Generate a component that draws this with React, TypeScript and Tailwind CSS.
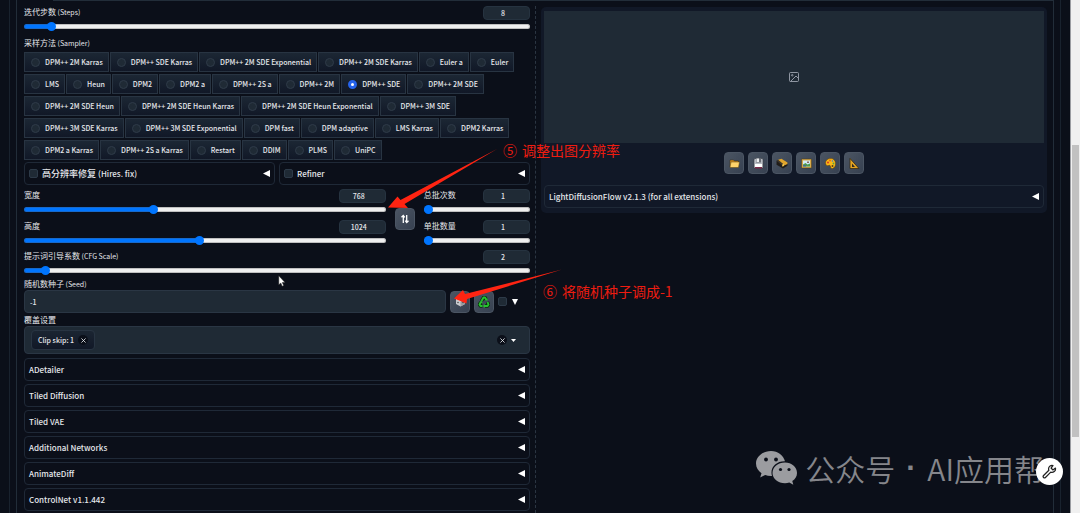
import { useState } from "react";
import type { ReactNode } from "react";

const samplers = [
  "DPM++ 2M Karras", "DPM++ SDE Karras", "DPM++ 2M SDE Exponential", "DPM++ 2M SDE Karras", "Euler a", "Euler",
  "LMS", "Heun", "DPM2", "DPM2 a", "DPM++ 2S a", "DPM++ 2M", "DPM++ SDE", "DPM++ 2M SDE",
  "DPM++ 2M SDE Heun", "DPM++ 2M SDE Heun Karras", "DPM++ 2M SDE Heun Exponential", "DPM++ 3M SDE",
  "DPM++ 3M SDE Karras", "DPM++ 3M SDE Exponential", "DPM fast", "DPM adaptive", "LMS Karras", "DPM2 Karras",
  "DPM2 a Karras", "DPM++ 2S a Karras", "Restart", "DDIM", "PLMS", "UniPC",
];

const extensions = ["ADetailer", "Tiled Diffusion", "Tiled VAE", "Additional Networks", "AnimateDiff", "ControlNet v1.1.442"];

function SliderField({ id, label, note, min, max, step = 1, initial }: {
  id: string; label: string; note?: string; min: number; max: number; step?: number; initial: number;
}) {
  const [value, setValue] = useState(initial);
  const ratio = (value - min) / (max - min);
  const stop = `calc(${ratio * 100}% + ${(0.5 - ratio) * 9}px)`;
  return (
    <div>
      <div className="flex h-[14px] items-start justify-between">
        <label htmlFor={id} className="text-[8px] leading-3">
          {label}
          {note && <span className="text-[7px]"> {note}</span>}
        </label>
        <input
          type="number"
          aria-label={label}
          value={value}
          min={min}
          max={max}
          onChange={(e) => setValue(Number(e.target.value))}
          className="h-[14px] w-[47px] rounded-[4px] border border-[#263340] bg-[#1f2a35] pr-[7px] text-center leading-3 font-medium [appearance:textfield] [&::-webkit-inner-spin-button]:appearance-none"
        />
      </div>
      <div className="mt-px flex h-[10px] items-center">
        <input
          id={id}
          type="range"
          min={min}
          max={max}
          step={step}
          value={value}
          onChange={(e) => setValue(Number(e.target.value))}
          style={{ backgroundImage: `linear-gradient(to right, #0075ff ${stop}, #efefef ${stop})` }}
          className="h-[5px] w-full appearance-none rounded-full shadow-[inset_0_0_0_1px_rgba(80,80,80,0.3)] [&::-webkit-slider-thumb]:size-[9px] [&::-webkit-slider-thumb]:appearance-none [&::-webkit-slider-thumb]:rounded-full [&::-webkit-slider-thumb]:bg-[#0075ff]"
        />
      </div>
    </div>
  );
}

function LeftTriangle() {
  return (
    <svg viewBox="0 0 7 7" className="size-[7px] shrink-0" fill="#fff" aria-hidden="true">
      <path d="M7 0v7L0 3.5z" />
    </svg>
  );
}

function Accordion({ title, lead, checkable = false }: { title: string; lead?: string; checkable?: boolean }) {
  return (
    <div className="flex h-[23px] items-center rounded-[4px] border border-[#1f2937] px-1 text-[8px] font-medium">
      {checkable && <Tick label={title} />}
      <button type="button" className={checkable ? "ml-1 flex flex-1 items-center justify-between leading-3" : "flex flex-1 items-center justify-between leading-3"}>
        <span>
          {lead && <span className="text-[9px]">{lead} </span>}
          {title}
        </span>
        <LeftTriangle />
      </button>
    </div>
  );
}

function Tick({ label }: { label: string }) {
  return (
    <input
      type="checkbox"
      aria-label={label}
      className="size-[9px] shrink-0 appearance-none rounded-[2px] border border-[#2d3a48] bg-[#1f2a35] checked:bg-[#2563eb]"
    />
  );
}

function ToolButton({ label, children }: { label: string; children: ReactNode }) {
  return (
    <button
      type="button"
      aria-label={label}
      className="flex h-[22px] w-5 shrink-0 items-center justify-center rounded-[4px] border border-[#4b5563] bg-linear-to-br from-[#4b5563] to-[#374151]"
    >
      {children}
    </button>
  );
}

const iconClass = "size-[11px]";

const outputTools: { label: string; icon: ReactNode }[] = [
  {
    label: "Open folder",
    icon: (
      <svg viewBox="0 0 22 22" className={iconClass}>
        <path d="M2 4h7l2 2h8v12H2z" fill="#d08a1c" stroke="#3a2c10" />
        <path d="M4 8h17l-2 11H2z" fill="#ffd36b" stroke="#5a4213" />
      </svg>
    ),
  },
  {
    label: "Save image",
    icon: (
      <svg viewBox="0 0 22 22" className={iconClass}>
        <path d="M2 3l2-2h14l2 2v17H2z" fill="#b9bdc4" stroke="#30343b" />
        <path d="M6 1h10v8H6z" fill="#6a6e76" />
        <path d="M7 1h5v7H7z" fill="#eceef0" />
        <path d="M4 12h14v6H4z" fill="#fff" />
        <path d="M4 18h14v3H4z" fill="#7d2a4a" />
      </svg>
    ),
  },
  {
    label: "Save zip",
    icon: (
      <svg viewBox="0 0 22 22" className="size-[12px]">
        <path d="M1 7l8-2 12 7v4l-8 5L1 14z" fill="#1f1c19" />
        <path d="M1 7l5-2 10 7v3l-3 2z" fill="#3d3529" />
        <path d="M4 5l6-2 11 7v3l-5 2z" fill="#e0a52c" />
        <path d="M11 14l4-2v4l-3 2z" fill="#f3c34b" />
      </svg>
    ),
  },
  {
    label: "Send to img2img",
    icon: (
      <svg viewBox="0 0 22 22" className={iconClass}>
        <path d="M1 2h20v18H1z" fill="#d7a94a" stroke="#4a3813" />
        <path d="M4 5h14v12H4z" fill="#d4ecf5" />
        <path d="M4 13l5-3 4 3 5-2v6H4z" fill="#4f9b4e" />
        <path d="M4 14h6v3H4z" fill="#4b6d8e" />
        <path d="M12 7h4v3h-4z" fill="#8b6b63" />
      </svg>
    ),
  },
  {
    label: "Send to inpaint",
    icon: (
      <svg viewBox="0 0 22 22" className={iconClass}>
        <path d="M11 1C4 1 1 6 1 10c0 4 3 6 6 5 2-1 4 0 4 2 0 3 2 4 4 4 4-1 6-5 6-10 0-6-4-10-10-10z" fill="#fbb916" stroke="#5a3d09" />
        <circle cx="6" cy="9" r="2" fill="#d9352c" />
        <circle cx="10" cy="5" r="2" fill="#e66a1a" />
        <circle cx="15" cy="6" r="1.600" fill="#2f7fd6" />
        <circle cx="17" cy="11" r="1.800" fill="#51a245" />
        <circle cx="15" cy="16" r="2" fill="#4b3b23" />
      </svg>
    ),
  },
  {
    label: "Send to extras",
    icon: (
      <svg viewBox="0 0 22 22" className={iconClass}>
        <path d="M2 1l18 20H2z" fill="#e3a322" stroke="#33260d" strokeWidth="1.500" />
        <path d="M6 11l6 7H6z" fill="#2f2a22" />
      </svg>
    ),
  },
];

function SettingsColumn() {
  const [sampler, setSampler] = useState("DPM++ SDE");
  return (
    <section className="min-w-0 pt-[5px]">
      <SliderField id="steps" label="迭代步数" note="(Steps)" min={1} max={150} initial={8} />

      <fieldset className="mt-[7px]">
        <legend className="h-[14px] text-[8px] leading-[10px]">
          采样方法<span className="text-[7px]"> (Sampler)</span>
        </legend>
        <div className="flex flex-wrap gap-x-px gap-y-[2px]">
          {samplers.map((name) => (
            <label
              key={name}
              className="flex h-5 items-center gap-[5px] border border-[#283442] bg-linear-to-b from-[#1c2734] to-[#111827] pr-[5px] pl-[6px] font-medium whitespace-nowrap"
            >
              <input
                type="radio"
                name="sampler"
                checked={sampler === name}
                onChange={() => setSampler(name)}
                className="size-[9px] appearance-none rounded-full border border-[#2f3b49] bg-[#1f2a35] checked:border-[3px] checked:border-[#2563eb] checked:bg-white"
              />
              <span className="leading-3">{name}</span>
            </label>
          ))}
        </div>
      </fieldset>

      <div className="mt-[2px] grid grid-cols-2 gap-1">
        <Accordion lead="高分辨率修复" title="(Hires. fix)" checkable />
        <Accordion title="Refiner" checkable />
      </div>

      <div className="mt-1 flex items-center">
        <div className="flex min-w-0 flex-1 flex-col gap-[6px]">
          <SliderField id="width" label="宽度" min={64} max={2048} step={8} initial={768} />
          <SliderField id="height" label="高度" min={64} max={2048} step={8} initial={1024} />
        </div>
        <div className="flex w-[38px] justify-center pt-[3px]">
          <ToolButton label="Switch width and height">
            <svg viewBox="0 0 10 10" className="size-[10px]" fill="none" stroke="#fff" strokeWidth="1.300">
              <path d="M3.300 9V1.500M1.500 3.300l1.800-1.900 1.500 1.900M6.700 1v7.500M5.200 6.700l1.500 1.900 1.800-1.900" />
            </svg>
          </ToolButton>
        </div>
        <div className="flex w-[21%] flex-col gap-[6px]">
          <SliderField id="batch-count" label="总批次数" min={1} max={100} initial={1} />
          <SliderField id="batch-size" label="单批数量" min={1} max={8} initial={1} />
        </div>
      </div>

      <div className="mt-[5px]">
        <SliderField id="cfg" label="提示词引导系数" note="(CFG Scale)" min={1} max={30} initial={2} />
      </div>

      <label htmlFor="seed" className="mt-1 block text-[8px] leading-[10px]">
        随机数种子<span className="text-[7px]"> (Seed)</span>
      </label>
      <div className="mt-px flex items-center gap-1">
        <input
          id="seed"
          type="text"
          defaultValue="-1"
          className="h-[23px] min-w-0 flex-1 rounded-[4px] border border-[#2a3644] bg-[#1f2a35] px-[5px] font-medium"
        />
        <ToolButton label="Random seed">
          <svg viewBox="0 0 22 22" className={iconClass}>
            <path d="M11 2l9 4v10l-9 5-9-5V6z" fill="#c9cbcf" />
            <path d="M11 2l9 4-9 5-9-5z" fill="#fff" />
            <path d="M11 11l9-5v10l-9 5z" fill="#9a9ca1" />
            <circle cx="11" cy="6" r="2" fill="#c0262d" />
            <circle cx="6" cy="13" r="1.300" fill="#333" />
            <circle cx="16" cy="13" r="1.300" fill="#333" />
          </svg>
        </ToolButton>
        <ToolButton label="Reuse seed">
          <svg viewBox="0 0 24 24" className="size-[12px]" fill="none" strokeLinejoin="round">
            <g stroke="#07300a" strokeWidth="7">
              <path d="M7 10l4-7h3l3 5M19 12l2 5-2 3h-6M9 20H5l-2-3 3-5" />
            </g>
            <g stroke="#27c22f" strokeWidth="3.800">
              <path d="M7 10l4-7h3l3 5M19 12l2 5-2 3h-6M9 20H5l-2-3 3-5" />
            </g>
            <path d="M13 9h6V4zM14 16v8l-4-4zM2 12l6-2 1 5z" fill="#27c22f" />
          </svg>
        </ToolButton>
        <div className="flex w-8 items-center gap-[5px]">
          <Tick label="Extra" />
          <svg viewBox="0 0 6 6" className="size-[6px]" fill="#fff" aria-hidden="true">
            <path d="M0 0h6L3 6z" />
          </svg>
        </div>
      </div>

      <div className="mt-[2px] text-[8px] leading-[10px]">覆盖设置</div>
      <div className="mt-px flex h-7 items-center rounded-[4px] border border-[#2a3644] bg-[#1f2a35] pr-[13px] pl-[6px]">
        <div className="flex h-5 items-center gap-1 rounded-[4px] border border-[#283442] bg-linear-to-b from-[#1b2532] to-[#111827] px-[6px] font-medium">
          <span>Clip skip: 1</span>
          <RoundClear label="Remove Clip skip" />
        </div>
        <div className="ml-auto flex items-center gap-1">
          <RoundClear label="Clear all" />
          <svg viewBox="0 0 5 3" className="h-[3px] w-[5px]" fill="#fff" aria-hidden="true">
            <path d="M0 0h5L2.500 3z" />
          </svg>
        </div>
      </div>

      <div className="mt-1 flex flex-col gap-[3px]">
        {extensions.map((name) => (
          <Accordion key={name} title={name} />
        ))}
      </div>
    </section>
  );
}

function RoundClear({ label }: { label: string }) {
  return (
    <button type="button" aria-label={label} className="flex size-[10px] items-center justify-center rounded-full bg-[#0b0f19]">
      <svg viewBox="0 0 6 6" className="size-[5px]" stroke="#e5e7eb" strokeWidth="1">
        <path d="M.5.5l5 5M5.500.5l-5 5" />
      </svg>
    </button>
  );
}

function OutputPanel() {
  return (
    <section className="mt-[6px] min-w-0 self-start rounded-[5px] bg-[#111827] px-[3px] pt-1 pb-[5px]">
      <div className="flex h-[132px] items-center justify-center bg-[#1f2a35]">
        <svg viewBox="0 0 24 24" className="size-[12px]" fill="none" stroke="#9ca3af" strokeWidth="1.800">
          <rect x="3" y="3" width="18" height="18" rx="2" />
          <circle cx="8.500" cy="8.500" r="1.500" />
          <path d="M21 15l-5-5L5 21" />
        </svg>
      </div>
      <div className="mt-[9px] mb-[11px] flex justify-center gap-1">
        {outputTools.map((tool) => (
          <ToolButton key={tool.label} label={tool.label}>{tool.icon}</ToolButton>
        ))}
      </div>
      <Accordion title="LightDiffusionFlow v2.1.3 (for all extensions)" />
    </section>
  );
}

function Annotations() {
  return (
    <div className="pointer-events-none absolute inset-0 overflow-hidden text-[14px] leading-5 text-[#ee1c10]">
      <svg className="absolute top-[145px] left-[385px] h-[160px] w-[182px]" viewBox="385 145 182 160" fill="#ff2412">
        <path d="M497 149L404.500 204L408 208L388 207.500L397.500 196.500L400.500 200Z" />
        <path d="M562 269.500L467 299L466.500 303.500L454 298.500L463 290L465 294Z" />
      </svg>
      <div className="absolute top-[140px] left-[503px] flex gap-[5px] whitespace-nowrap">
        <span>⑤</span>
        <span>调整出图分辨率</span>
      </div>
      <div className="absolute top-[281px] left-[543px] flex gap-[5px] whitespace-nowrap">
        <span>⑥</span>
        <span>将随机种子调成-1</span>
      </div>
      <svg className="absolute top-[275px] left-[278px] h-[12px] w-[8px]" viewBox="0 0 8 12" fill="#fff" stroke="#222" strokeWidth=".5">
        <path d="M.8.8v9l2-1.800 1.400 3.200 1.500-.7-1.400-3h2.700z" />
      </svg>
      <div className="absolute right-[36px] bottom-[27px] flex items-center gap-2 text-[#85868b]">
        <svg viewBox="0 0 41 34" className="h-[34px] w-[41px]" fill="#9b9ca0">
          <path d="M15 0C6.500 0 0 5.500 0 12.500c0 4 2.200 7.500 5.500 9.800L4.200 26.500l5-2.500c1.800.6 3.600.9 5.800.9h1C13.500 17 20 10 29 10.300 27.500 4.500 22 0 15 0z" />
          <path d="M29 11.500c-7 0-12.500 4.600-12.500 10.400S22 32.200 29 32.200c1.500 0 3-.2 4.300-.7l4 2.200-1-3.600c3-2 4.700-4.800 4.700-8.200 0-5.800-5.500-10.400-12-10.400z" />
          <g fill="#0b0f19">
            <circle cx="10" cy="8.500" r="1.900" />
            <circle cx="20" cy="8.500" r="1.900" />
            <circle cx="24.500" cy="18.500" r="1.600" />
            <circle cx="33" cy="18.500" r="1.600" />
          </g>
        </svg>
        <div className="flex text-[30px] leading-9 font-[350] whitespace-nowrap">
          <span>公众号</span>
          <span className="w-8 text-center font-['Liberation_Sans',sans-serif] font-bold">·</span>
          <span>AI应用帮</span>
        </div>
      </div>
      <button type="button" aria-label="Tools" className="pointer-events-auto absolute right-[17px] bottom-[28px] flex size-[27px] items-center justify-center rounded-full bg-white">
        <svg viewBox="0 0 24 24" className="size-[15px]" fill="none" stroke="#222" strokeWidth="2" strokeLinejoin="round" strokeLinecap="round">
          <path d="M21.500 6.500l-4 3-3-3 3-4c-3-1-7 1-7 5 0 1 .2 1.800.5 2.500l-8.500 8.500a2 2 0 0 0 3 3L14 13c4 1.500 8.500-2 7.500-6.500z" />
        </svg>
      </button>
    </div>
  );
}

export default function App() {
  return (
    <div className="relative flex min-h-screen bg-[#0b0f19] font-['Noto_Sans_CJK_SC','Noto_Sans',sans-serif] text-[7px] leading-3 text-[#e5e7eb]">
      <main className="flex min-w-0 flex-1 px-[9px]">
        <div className="flex min-w-0 flex-1 border-x border-[#19222e] px-[6px]">
          <div className="flex min-w-0 flex-1 flex-col border-x border-[#222d39]">
            <div className="ml-9 h-px bg-[#222d39]" />
            <div className="grid flex-1 grid-cols-[1fr_1px_1fr] gap-x-[5px] pr-[6px] pl-[7px]">
              <SettingsColumn />
              <div className="mt-[5px] border-l border-dashed border-[#2b3542]" />
              <OutputPanel />
            </div>
          </div>
        </div>
      </main>
      <div className="flex w-[10px] shrink-0 flex-col border-l border-[#9a9ca1] bg-[#f0f0f0] px-px pt-[145px]">
        <div className="h-[292px] bg-[#c1c1c1]" />
      </div>
      <Annotations />
    </div>
  );
}
